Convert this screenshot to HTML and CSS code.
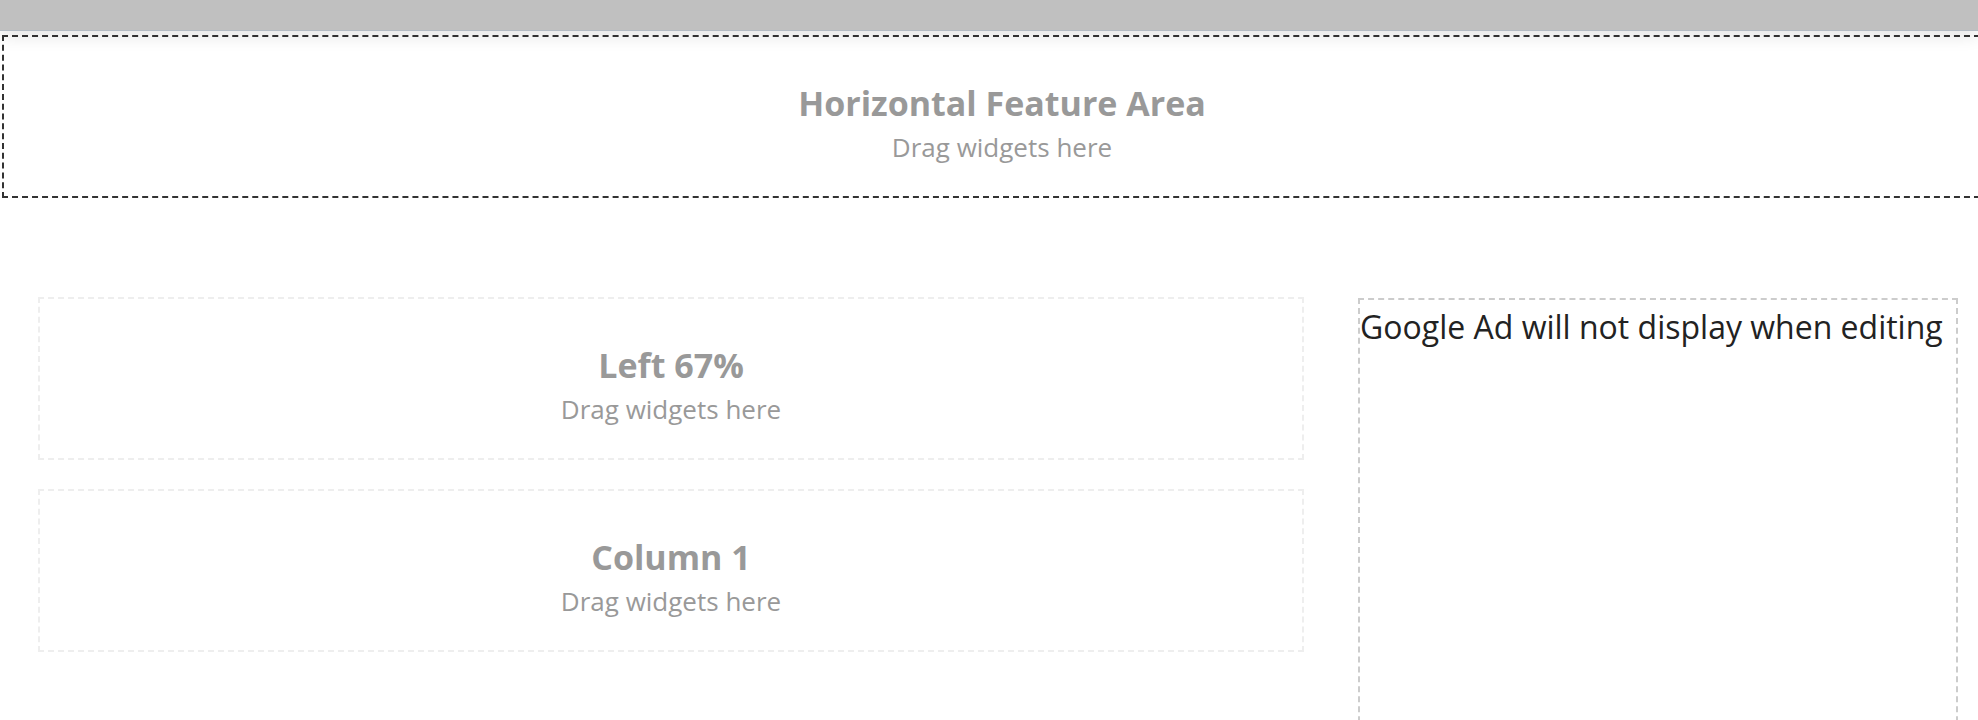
FILE: index.html
```html
<!DOCTYPE html>
<html lang="en">
<head>
<meta charset="utf-8">
<title>Page Editor</title>
<link rel="stylesheet" href="styles.css">
</head>
<body>
  <div class="toolbar"></div>

  <section class="feature-area">
    <div class="drop-title">Horizontal Feature Area</div>
    <div class="drop-hint">Drag widgets here</div>
  </section>

  <div class="layout">
    <div class="main-col">
      <section class="drop-zone">
        <div class="drop-title">Left 67%</div>
        <div class="drop-hint">Drag widgets here</div>
      </section>
      <section class="drop-zone">
        <div class="drop-title">Column 1</div>
        <div class="drop-hint">Drag widgets here</div>
      </section>
    </div>
    <aside class="ad-slot">
      <p class="ad-note">Google Ad will not display when editing</p>
    </aside>
  </div>
</body>
</html>
```

FILE: styles.css
```css
html, body {
  margin: 0;
  padding: 0;
  background: #fff;
  overflow: hidden;
}

body {
  font-family: "Open Sans", "Liberation Sans", sans-serif;
  height: 720px;
}

.toolbar {
  position: relative;
  z-index: 2;
  height: 30px;
  background: #c0c0c0;
  border-bottom: 1px solid #b4bbc3;
  box-shadow: 0 4px 18px rgba(0, 0, 0, 0.12);
}

.feature-area {
  margin: 4px -22px 0 2px;
  border: 2px dashed #333;
  border-right: none;
  padding: 44px 0 27px;
  text-align: center;
}

.drop-title {
  font-weight: 700;
  font-size: 34px;
  line-height: 44px;
  color: #999;
}

.drop-hint {
  font-size: 26px;
  line-height: 44px;
  color: #999;
}

.layout {
  display: flex;
  align-items: flex-start;
  gap: 54px;
  padding: 99px 0 0 38px;
}

.main-col {
  width: 1266px;
  display: flex;
  flex-direction: column;
  gap: 29px;
}

.drop-zone {
  border: 2px dashed #eee;
  padding: 44px 0 27px;
  text-align: center;
}

.ad-slot {
  width: 596px;
  height: 460px;
  margin-top: 1px;
  border: 2px dashed #ccc;
}

.ad-note {
  margin: 7px 0 0;
  font-size: 32px;
  line-height: 40px;
  color: #222;
}
```
